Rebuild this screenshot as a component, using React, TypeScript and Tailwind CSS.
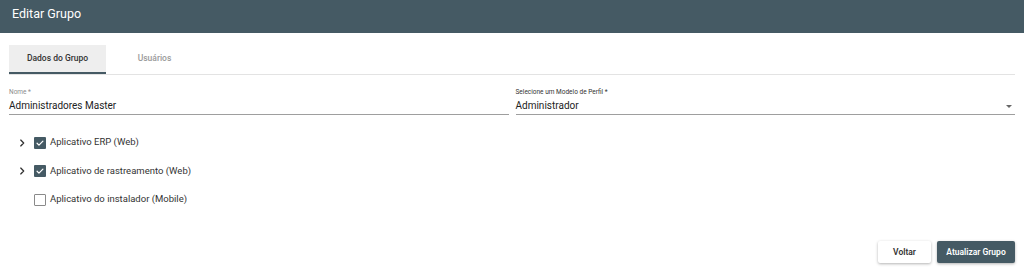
import { useState } from "react";

const font = { fontFamily: "Roboto, 'Liberation Sans', sans-serif" };

function Chevron() {
  return (
    <svg className="w-[10px] h-[10px] text-[#333]" viewBox="0 0 24 24" fill="none" stroke="currentColor" strokeWidth={3.2}>
      <path strokeLinecap="round" strokeLinejoin="round" d="M9 5l7 7-7 7" />
    </svg>
  );
}

function Check({ checked }: { checked: boolean }) {
  return checked ? (
    <span className="w-[12px] h-[12px] rounded-[1px] bg-[#455a64] flex items-center justify-center">
      <svg className="w-[10px] h-[10px]" viewBox="0 0 24 24" fill="none" stroke="white" strokeWidth={3}>
        <path strokeLinecap="round" strokeLinejoin="round" d="M5 12.5l4.5 4.5L19 7.5" />
      </svg>
    </span>
  ) : (
    <span className="w-[12px] h-[12px] rounded-[1px] border border-[#8a8a8a] bg-white" />
  );
}

const apps = [
  { label: "Aplicativo ERP (Web)", checked: true, expandable: true },
  { label: "Aplicativo de rastreamento (Web)", checked: true, expandable: true },
  { label: "Aplicativo do instalador (Mobile)", checked: false, expandable: false },
];

export default function App() {
  const [tab, setTab] = useState(0);

  return (
    <div className="w-[1024px] h-[271px] bg-white flex flex-col" style={font}>
      <header className="h-[33px] shrink-0 bg-[#455a64] flex items-center px-[12px]">
        <h1 className="text-white text-[12.5px] pb-[4px]">Editar Grupo</h1>
      </header>

      <div className="flex-1 flex flex-col px-[9px]">
        {/* abas */}
        <div className="mt-[12px] flex border-b border-[#e3e3e3]">
          {["Dados do Grupo", "Usuários"].map((t, i) => (
            <button
              key={t}
              onClick={() => setTab(i)}
              className={`w-[97px] h-[29px] text-[8.5px] font-medium border-b-2 ${
                tab === i ? "bg-[#eeeeee] text-[#333] border-[#455a64]" : "text-[#9a9a9a] border-transparent"
              }`}
            >
              {t}
            </button>
          ))}
        </div>

        {/* campos */}
        <div className="mt-[13px] flex gap-[7px]">
          <div className="flex-1 border-b border-[#9e9e9e]">
            <div className="text-[6.5px] text-[#8c8c8c] leading-[8px]">Nome *</div>
            <div className="text-[10px] text-[#222] leading-[12px] mt-[4px] pb-[2px]">Administradores Master</div>
          </div>
          <div className="flex-1 border-b border-[#9e9e9e]">
            <div className="text-[6.5px] text-[#333] leading-[8px]">Selecione um Modelo de Perfil *</div>
            <div className="flex items-center justify-between mt-[4px] pb-[2px]">
              <span className="text-[10px] text-[#222] leading-[12px]">Administrador</span>
              <span className="w-0 h-0 mr-[3px] border-l-[3.5px] border-r-[3.5px] border-t-[3.5px] border-l-transparent border-r-transparent border-t-[#666]" />
            </div>
          </div>
        </div>

        {/* aplicativos */}
        <div className="mt-[21px] flex flex-col gap-[15.5px]">
          {apps.map((a) => (
            <div key={a.label} className="flex items-center h-[13px]">
              <span className="w-[25px] pl-[8px] flex items-center">{a.expandable && <Chevron />}</span>
              <Check checked={a.checked} />
              <span className="ml-[4px] text-[9.5px] text-[#333]">{a.label}</span>
            </div>
          ))}
        </div>

        {/* ações */}
        <div className="mt-auto mb-[8px] flex justify-end gap-[6px]">
          <button className="w-[53px] h-[22px] bg-white text-[8.5px] font-semibold text-[#333] rounded-[2px] shadow-[0_1px_3px_rgba(0,0,0,0.3)]">
            Voltar
          </button>
          <button className="w-[78px] h-[22px] bg-[#455a64] text-[8.5px] font-semibold text-white rounded-[2px] shadow-[0_1px_3px_rgba(0,0,0,0.3)]">
            Atualizar Grupo
          </button>
        </div>
      </div>
    </div>
  );
}
